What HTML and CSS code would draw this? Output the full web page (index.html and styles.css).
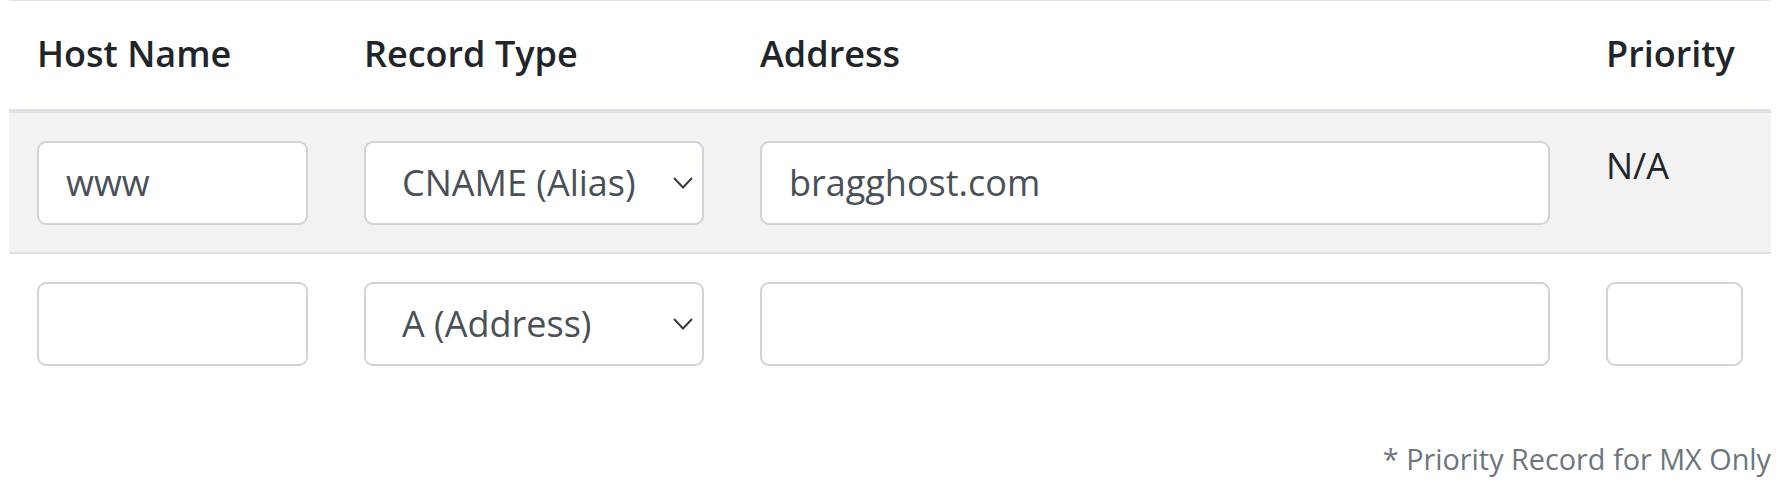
FILE: index.html
```html
<!DOCTYPE html>
<html lang="en">
<head>
<meta charset="utf-8">
<title>DNS Records</title>
<link rel="stylesheet" href="styles.css">
</head>
<body>
<div class="wrap">
  <div class="dns">
    <div class="row head">
      <div class="cell">Host Name</div>
      <div class="cell">Record Type</div>
      <div class="cell">Address</div>
      <div class="cell">Priority</div>
    </div>
    <div class="row striped">
      <div class="cell"><div class="field">www</div></div>
      <div class="cell"><div class="field select">CNAME (Alias)<svg class="chev" width="20" height="12" viewBox="0 0 20 12"><polyline points="1,1 10,10.5 19,1" fill="none" stroke="#343a40" stroke-width="2"/></svg></div></div>
      <div class="cell"><div class="field">bragghost.com</div></div>
      <div class="cell na">N/A</div>
    </div>
    <div class="row">
      <div class="cell"><div class="field"></div></div>
      <div class="cell"><div class="field select">A (Address)<svg class="chev" width="20" height="12" viewBox="0 0 20 12"><polyline points="1,1 10,10.5 19,1" fill="none" stroke="#343a40" stroke-width="2"/></svg></div></div>
      <div class="cell"><div class="field"></div></div>
      <div class="cell"><div class="field"></div></div>
    </div>
  </div>
  <p class="note">* Priority Record for MX Only</p>
</div>
</body>
</html>
```
FILE: styles.css
```css
html, body {
  margin: 0;
  padding: 0;
  background: #ffffff;
}
body {
  font-family: "Open Sans", "Liberation Sans", sans-serif;
  font-size: 36px;
  line-height: 1.5;
  color: #212529;
}
.wrap {
  width: 1762px;
  margin-left: 9px;
}
.dns {
  display: flex;
  flex-direction: column;
}
.row {
  display: grid;
  grid-template-columns: 327px 396px 846px 193px;
}
.cell {
  padding: 28px 28px 27px 28px;
  min-width: 0;
}
.head {
  border-top: 1px solid #dee2e6;
  border-bottom: 4px solid #dee2e6;
}
.head .cell {
  font-weight: 600;
  padding: 26px 28px 28px 28px;
  white-space: nowrap;
}
.striped {
  background: #f2f2f2;
  border-bottom: 2px solid #dee2e6;
}
.cell.na {
  padding-top: 26px;
}
.field {
  box-sizing: border-box;
  height: 84px;
  border: 2px solid #ced4da;
  border-radius: 9px;
  background: #ffffff;
  color: #495057;
  padding: 13px 27px;
  line-height: 54px;
  white-space: nowrap;
  position: relative;
}
.select {
  padding-left: 36px;
}
.chev {
  position: absolute;
  right: 9px;
  top: 34px;
}
.note {
  margin: 44px 0 0 0;
  text-align: right;
  font-size: 28.8px;
  line-height: 1.5;
  color: #6c757d;
}
```
